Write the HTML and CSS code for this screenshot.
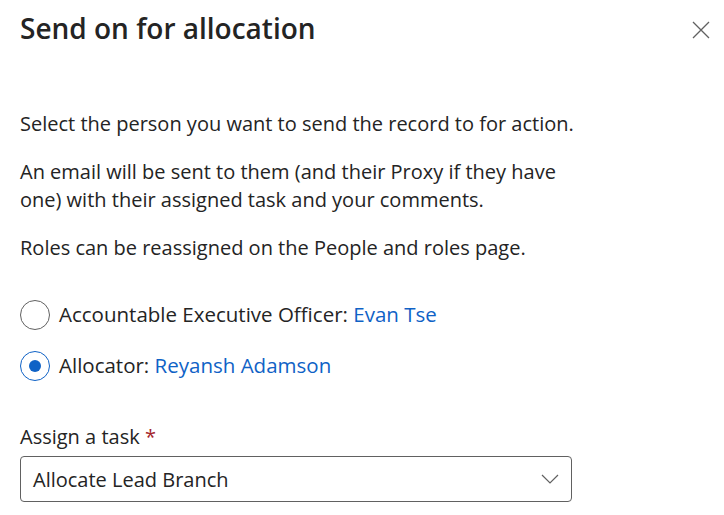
FILE: index.html
```html
<!DOCTYPE html>
<html lang="en">
<head>
<meta charset="utf-8">
<title>Send on for allocation</title>
<link rel="stylesheet" href="styles.css">
</head>
<body>
<div class="panel">
  <header class="panel-header">
    <h1 class="panel-title">Send on for allocation</h1>
    <button class="close-btn" aria-label="Close">
      <svg width="18" height="18" viewBox="0 0 18 18"><path d="M1 1 L17 17 M17 1 L1 17" stroke="#616161" stroke-width="1.3" fill="none"/></svg>
    </button>
  </header>
  <div class="panel-body">
    <p class="text">Select the person you want to send the record to for action.</p>
    <p class="text">An email will be sent to them (and their Proxy if they have one) with their assigned task and your comments.</p>
    <p class="text">Roles can be reassigned on the People and roles page.</p>
    <div class="radio-group">
      <label class="radio">
        <span class="radio-circle"></span>
        <span class="radio-label">Accountable Executive Officer: <a class="link" href="#">Evan Tse</a></span>
      </label>
      <label class="radio checked">
        <span class="radio-circle"></span>
        <span class="radio-label">Allocator: <a class="link" href="#">Reyansh Adamson</a></span>
      </label>
    </div>
    <div class="field">
      <div class="field-label">Assign a task <span class="req">*</span></div>
      <div class="dropdown">
        <span class="dropdown-value">Allocate Lead Branch</span>
        <svg class="chevron" width="18" height="10" viewBox="0 0 18 10"><path d="M1 1 L9 9 L17 1" stroke="#616161" stroke-width="1.2" fill="none"/></svg>
      </div>
    </div>
  </div>
</div>
</body>
</html>
```
FILE: styles.css
```css
html, body {
  margin: 0;
  padding: 0;
  background: #ffffff;
}
body {
  font-family: "Open Sans", "Noto Sans", "Liberation Sans", sans-serif;
  color: #242424;
}
.panel {
  width: 724px;
  height: 515px;
  overflow: hidden;
}
.panel-header {
  display: flex;
  align-items: flex-start;
  justify-content: space-between;
  padding: 10px 14px 0 20px;
}
.panel-title {
  margin: 0;
  font-size: 28px;
  line-height: 36px;
  font-weight: 600;
  color: #242424;
}
.close-btn {
  background: none;
  border: none;
  padding: 0;
  margin-top: 11px;
  width: 18px;
  height: 18px;
  cursor: pointer;
}
.close-btn svg { display: block; }
.panel-body {
  padding: 64px 20px 0 20px;
}
.text {
  margin: 0 0 20px 0;
  font-size: 20px;
  line-height: 28px;
  max-width: 560px;
  color: #242424;
}
.radio-group {
  display: flex;
  flex-direction: column;
  gap: 20px;
  margin-top: 37px;
}
.radio {
  display: flex;
  align-items: center;
  gap: 9px;
  font-size: 20.5px;
  line-height: 31px;
}
.radio-circle {
  width: 28px;
  height: 28px;
  border: 1px solid #616161;
  border-radius: 50%;
  display: flex;
  align-items: center;
  justify-content: center;
  flex: none;
}
.radio.checked .radio-circle {
  border-color: #0f62c6;
}
.radio.checked .radio-circle::after {
  content: "";
  width: 12px;
  height: 12px;
  border-radius: 50%;
  background: #0f62c6;
}
.link {
  color: #0f62c6;
  text-decoration: none;
}
.field {
  margin-top: 42px;
}
.field-label {
  font-size: 20px;
  line-height: 28px;
  margin-bottom: 5px;
}
.req { color: #a4262c; }
.dropdown {
  box-sizing: border-box;
  height: 46px;
  width: 552px;
  border: 1px solid #616161;
  border-radius: 4px;
  display: flex;
  align-items: center;
  justify-content: space-between;
  padding: 0 12px 0 12px;
}
.dropdown-value {
  font-size: 20px;
}
.chevron { display: block; }
```
